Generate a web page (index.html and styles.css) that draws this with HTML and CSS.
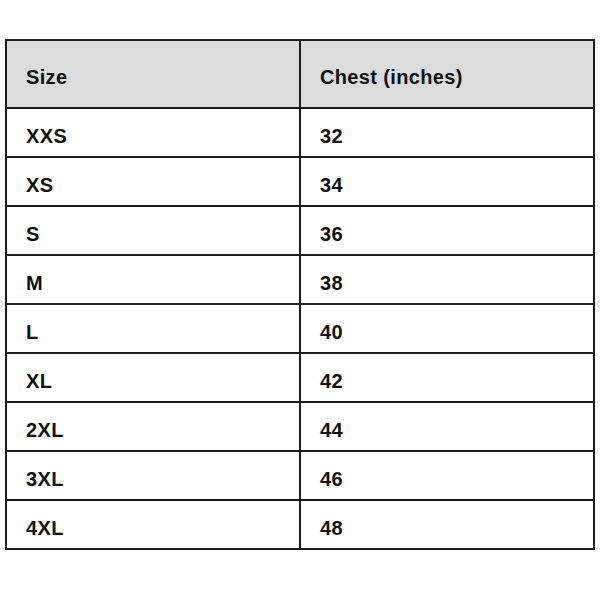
FILE: index.html
```html
<!DOCTYPE html>
<html>
<head>
<meta charset="utf-8">
<link rel="stylesheet" href="styles.css">
</head>
<body>
<div class="page">
  <div class="chart">
    <div class="cell head">Size</div>
    <div class="cell head">Chest (inches)</div>
    <div class="cell">XXS</div><div class="cell">32</div>
    <div class="cell">XS</div><div class="cell">34</div>
    <div class="cell">S</div><div class="cell">36</div>
    <div class="cell">M</div><div class="cell">38</div>
    <div class="cell">L</div><div class="cell">40</div>
    <div class="cell">XL</div><div class="cell">42</div>
    <div class="cell">2XL</div><div class="cell">44</div>
    <div class="cell">3XL</div><div class="cell">46</div>
    <div class="cell">4XL</div><div class="cell">48</div>
  </div>
</div>
</body>
</html>
```

FILE: styles.css
```css
html, body {
  margin: 0;
  padding: 0;
  background: #ffffff;
}
.page {
  width: 600px;
  height: 600px;
  padding: 39px 0 0 5px;
  box-sizing: border-box;
}
.chart {
  width: 590px;
  box-sizing: border-box;
  display: grid;
  grid-template-columns: 292px 292px;
  grid-template-rows: 66px repeat(9, 47px);
  gap: 2px;
  padding: 2px;
  background: #1c1c1c;
  font-family: "Liberation Sans", Arial, sans-serif;
  font-weight: bold;
  font-size: 20px;
  color: #111111;
}
.cell {
  background: #ffffff;
  display: flex;
  align-items: center;
  padding: 8px 0 0 19px;
  box-sizing: border-box;
  letter-spacing: 0.35px;
}
.head {
  background: #dcdcdc;
  padding-top: 6px;
}
```
